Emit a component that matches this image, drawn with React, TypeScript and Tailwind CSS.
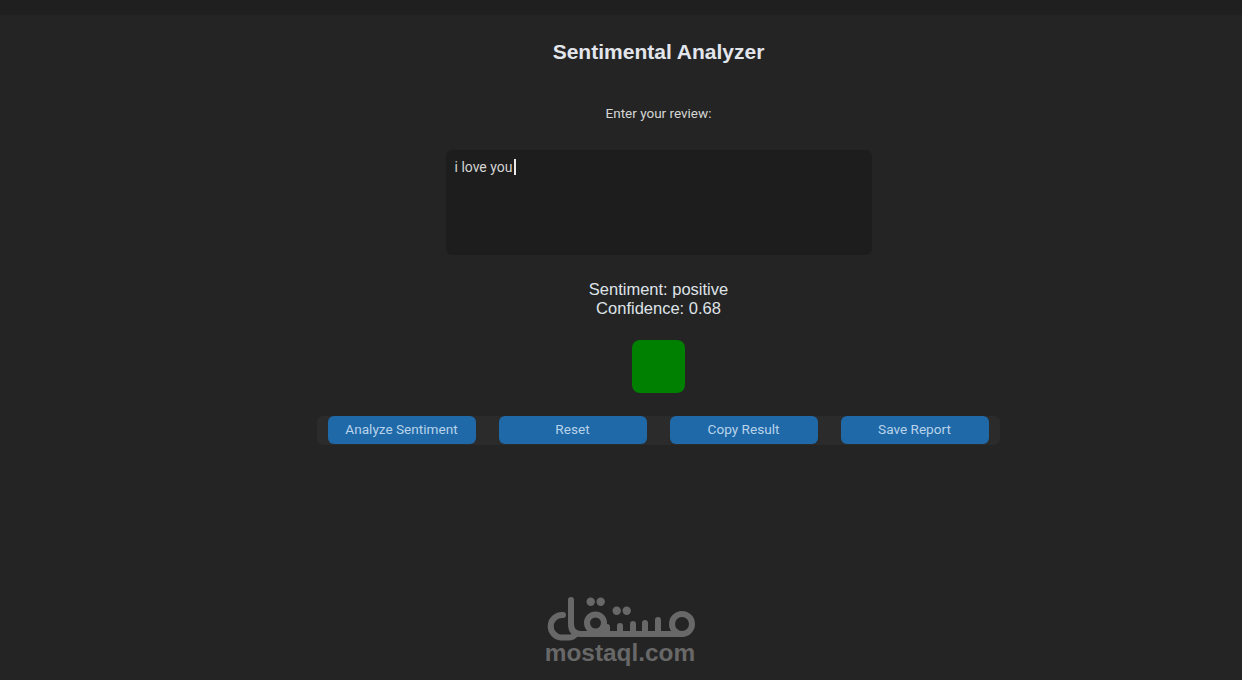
function Logo() {
  // mostaql wordmark, drawn as strokes
  return (
    <svg width="150" height="46" viewBox="0 0 150 46" fill="none" stroke="#686868" strokeWidth="6" strokeLinecap="round" strokeLinejoin="round">
      <path d="M18 19A11 11 0 1 0 16 41.5H24Q28 41.5 30 39" />
      <path d="M26 4V28Q26 38 36 38H137" />
      <circle cx="50.5" cy="27" r="8.5" />
      <path d="M62 31V38M75 30V38M88 28V38M100 27V38M113 24V38" />
      <circle cx="137" cy="28" r="10" />
      <circle cx="45.7" cy="5.7" r="4.2" fill="#686868" stroke="none" />
      <circle cx="55.7" cy="5.7" r="4.2" fill="#686868" stroke="none" />
      <circle cx="71.7" cy="14.7" r="4.2" fill="#686868" stroke="none" />
      <circle cx="81.7" cy="14.7" r="4.2" fill="#686868" stroke="none" />
    </svg>
  );
}

export default function App() {
  const buttons = ["Analyze Sentiment", "Reset", "Copy Result", "Save Report"];

  return (
    <div className="h-[680px] w-[1242px] overflow-hidden bg-[#242424] font-['Roboto',sans-serif]">
      <div className="h-[15px] bg-[#1f1f1f]" />
      <div className="ml-[75px] flex flex-col items-center">
        <h1 className="mt-[22px] font-['Liberation_Sans',sans-serif] text-[21px] leading-[30px] font-bold text-[#e2e6ec]">Sentimental Analyzer</h1>
        <label className="mt-[36px] text-[13.5px] leading-[20px] text-[#d6d6d6]">Enter your review:</label>
        <div className="mt-[27px] h-[105px] w-[426px] rounded-md bg-[#1d1d1d] px-[9px] py-[6px] text-[14px] leading-[20px] text-[#d4d4d4]">
          i love you<span className="ml-[2px] inline-block h-[16px] w-[2px] translate-y-[3px] bg-[#e8e8e8]" />
        </div>
        <div className="mt-[25px] text-center font-['Liberation_Sans',sans-serif] text-[16.5px] leading-[19px] text-[#dfe3e8]">
          <p>Sentiment: positive</p>
          <p>Confidence: 0.68</p>
        </div>
        <div className="mt-[22px] mr-px h-[53px] w-[53px] rounded-lg bg-[#008000]" />
        <div className="mt-[23px] mr-px flex h-[29px] w-[683px] gap-[23px] rounded-md bg-[#2b2b2b] pl-[11px]">
          {buttons.map((b) => (
            <button key={b} className="h-[28px] w-[148px] rounded-md bg-[#1f69a8] pb-[2px] text-[13.6px] text-[#b9d3ea]">
              {b}
            </button>
          ))}
        </div>
      </div>
      <div className="mt-[151px] flex flex-col items-center pr-[2px]">
        <Logo />
        <span className="-mt-[2px] font-['Liberation_Sans',sans-serif] text-[24.4px] leading-[26px] font-bold text-[#686868]">mostaql.com</span>
      </div>
    </div>
  );
}
